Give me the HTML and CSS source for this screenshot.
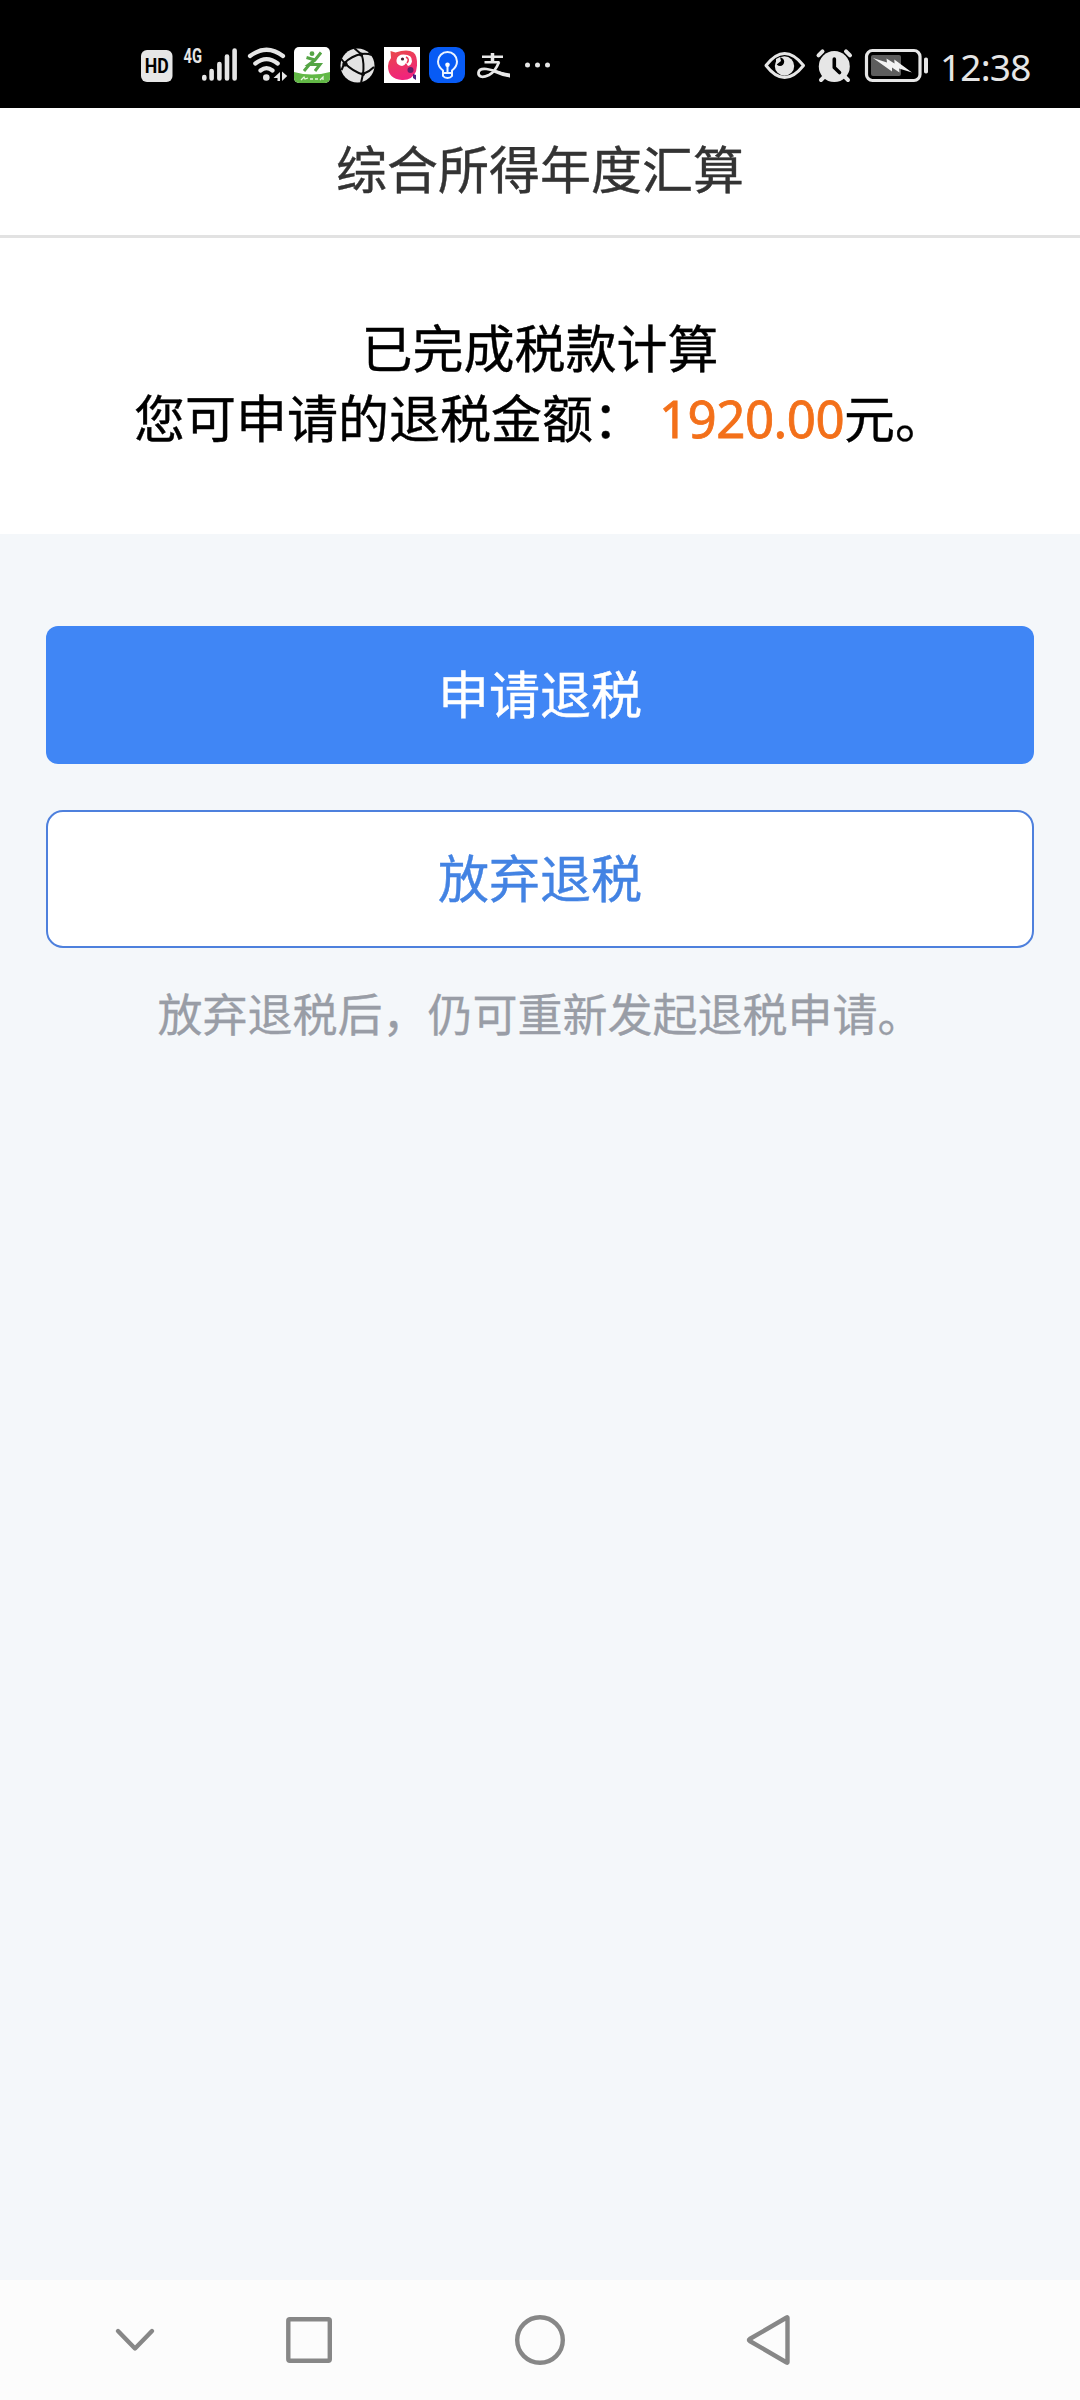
FILE: index.html
```html
<!DOCTYPE html>
<html lang="zh-CN">
<head>
<meta charset="utf-8">
<title>综合所得年度汇算</title>
<link rel="stylesheet" href="styles.css">
</head>
<body>
<div class="screen">
  <div class="status-bar">
    <div class="status-group">
      <svg class="hd" viewBox="141 40 37 46" width="37" height="46"><rect x="141" y="50" width="31.500" height="32" rx="6" fill="#e6e6e6"/><text x="156.700" y="73" text-anchor="middle" textLength="24" lengthAdjust="spacingAndGlyphs" class="hd-text">HD</text></svg>
      <svg viewBox="178 40 66 46" width="66" height="46"><text x="183.500" y="62.500" textLength="18.500" lengthAdjust="spacingAndGlyphs" class="net-text">4G</text><g stroke="#e6e6e6" stroke-width="4.600" stroke-linecap="round"><path d="M204.300 77v1.500M211.600 71v7.500M219.400 64v14.500M227 56.500v22M234.600 50.500v28"/></g></svg>
      <svg viewBox="244 40 50 46" width="50" height="46"><g fill="none" stroke="#e6e6e6" stroke-width="4.200" stroke-linecap="round"><path d="M250 56q16.500-12.500 33 0M255.300 63.500q11.200-8.800 22.400 0M260.500 70.500q6-4.600 12 0"/></g><circle cx="266.300" cy="77.500" r="3.300" fill="#e6e6e6"/><path d="M280 72v9h-2.500v-3h-4zM282 71.500l5.200 4.500-5.200 5z" fill="#e6e6e6"/></svg>
      <svg viewBox="294 40 45 46" width="45" height="46"><clipPath id="greenClip"><rect x="294" y="47" width="36" height="36" rx="5"/></clipPath><g clip-path="url(#greenClip)"><path fill="#fff" d="M294 47h36v36h-36z"/><path d="M294 72q18 5 36 0v12h-36z" fill="#62b846"/><circle cx="312" cy="53.700" r="2.400" fill="#55a545"/><path d="M306.500 57.500l8.500 2.500 6-7.500M315 60l-6 4.500h11l-5 6.500M309 65l-5 6" fill="none" stroke="#55a545" stroke-width="3"/><path d="M301 80l3-3 1 2 3-1M310 79h3M315 79h3M320 80l3-3v3" fill="none" stroke="#e8f6df" stroke-width="1.300"/></g></svg>
      <svg viewBox="339 40 45 46" width="45" height="46"><circle cx="357.500" cy="65.500" r="17" fill="#e3e3e3"/><path d="M344.500 63q7-7 17-9 3 9 1.500 20.500-10-3-18.500-11.500M361 54l-7-6M361 54q6-1 11 1M363 74q6-2 11-7M363 74l-2 9M344.500 63l-4-5M344.500 63l-3 7" fill="none" stroke="#090909" stroke-width="2"/><g fill="#090909"><circle cx="361" cy="54.500" r="2"/><circle cx="345" cy="64" r="2.600"/><circle cx="363" cy="74" r="2"/></g></svg>
      <svg viewBox="384 40 45 46" width="45" height="46"><defs><linearGradient id="bird" x2="0.300" y2="1"><stop stop-color="#e94948"/><stop offset="1" stop-color="#f0247c"/></linearGradient></defs><path fill="#fff" d="M384 47h36v36h-36z"/><path d="M390.500 51l5 1.500q12-4 18 0 4 3 3.500 13l-1 6q-4 9-14 8.500-14-1-14-14 0-4 3-8z" fill="url(#bird)"/><path d="M396.500 60q1-5.500 7-5.500 9 0 8.500 7-1 4-4 4.500l-2-3q-2 4-6 2.500-4-1.500-3.500-5.500" fill="#fff"/><path d="M406 57q4 2 1 6" fill="none" stroke="#ec3858" stroke-width="1.500"/><circle cx="402.500" cy="59" r="1.600" fill="#4b1d2e"/><circle cx="410.500" cy="70" r="3" fill="#681d68"/><path d="M413 74l3 1v5l-3-2z" fill="#4b1f7c"/></svg>
      <svg viewBox="429 40 45 46" width="45" height="46"><rect x="429" y="47" width="36" height="36" rx="9" fill="#075bf5"/><g fill="none" stroke="#eaf3ff" stroke-width="2" stroke-linejoin="round"><path d="M443 73v-2.500q-5-4-5-9a9.500 9.500 0 0 1 19 0q0 5-5 9V73zM443 73v3q1.500 2 4.500 2t4.500-2v-3M447.500 65v8"/></g><circle cx="447.500" cy="64.700" r="2.300" fill="#fff"/></svg>
      <svg viewBox="474 40 51 46" width="51" height="46"><g fill="none" stroke="#e8e8e8" stroke-linecap="butt"><path d="M482 56.700h21M484.500 62.300h15" stroke-width="2.400"/><path d="M492.500 53v10" stroke-width="3.500"/><path d="M499 62q-4 10-10 13-9 4-10.500-1-.5-6 8-5 7 1 13 3.500 5 2 10 3.300" stroke-width="2.700"/></g><path d="M494 69.500q8 3.500 16 4v4q-8-1-16.500-5z" fill="#e8e8e8"/></svg>
      <svg viewBox="525 40 28 46" width="28" height="46"><g fill="#e6e6e6"><circle cx="527.500" cy="65" r="2.500"/><circle cx="537.500" cy="65" r="2.500"/><circle cx="547.500" cy="65" r="2.500"/></g></svg>
    </div>
    <div class="status-group">
      <svg viewBox="763 40 51 46" width="51" height="46"><path d="M766 65.500q18.500-24 37.500 0-19 24-37.500 0z" fill="none" stroke="#e6e6e6" stroke-width="3" stroke-linejoin="round"/><circle cx="784.500" cy="66" r="9.700" fill="#e6e6e6"/><circle cx="780" cy="61.700" r="4.200"/><path d="M776 59l4-2 1 4-5 4z" fill="#e6e6e6"/></svg>
      <svg viewBox="814 40 50 46" width="50" height="46"><circle cx="834.300" cy="66.500" r="15.500" fill="#e6e6e6"/><path d="M818.500 55.300l4-4M850 55.300l-4-4M824 77l-3 3M845 77l3 3" fill="none" stroke="#e6e6e6" stroke-width="4" stroke-linecap="round"/><path d="M834.300 59v8.500l5.200 5" fill="none" stroke="#000" stroke-width="3.600" stroke-linecap="round" stroke-linejoin="round"/></svg>
      <svg viewBox="864 40 76 46" width="76" height="46"><rect x="866.500" y="50.500" width="53.500" height="30" rx="6" fill="none" stroke="#e6e6e6" stroke-width="3.200"/><rect x="871" y="55" width="30" height="21" rx="2" fill="#5d5d5d"/><path d="M873 58l14 4.500-.5-4 8 5-.2-4L912 72.500l-13-4 .5 4-7.500-5v4z" fill="#f2f2f2"/><rect x="924" y="57.500" width="4" height="16" rx="1.800" fill="#e6e6e6"/></svg>
      <span class="clock">12:38</span>
    </div>
  </div>
  <header class="title-bar">综合所得年度汇算</header>
  <section class="result">
    <p>已完成税款计算</p>
    <p>您可申请的退税金额：<span class="amount">1920.00</span>元。</p>
  </section>
  <main class="actions">
    <button class="btn btn-primary">申请退税</button>
    <button class="btn btn-outline">放弃退税</button>
    <p class="hint">放弃退税后，仍可重新发起退税申请。</p>
  </main>
  <nav class="nav-bar">
    <svg viewBox="110 2310 50 60" width="50" height="60"><path d="M118 2331l17 17.500 17-17.500"/></svg>
    <svg viewBox="284 2310 50 60" width="50" height="60"><rect x="288.300" y="2319.300" width="41.500" height="41.500" rx="1.500"/></svg>
    <svg viewBox="515 2310 50 60" width="50" height="60"><circle cx="540" cy="2340" r="22.800"/></svg>
    <svg viewBox="743 2310 50 60" width="50" height="60"><path d="M787.500 2317.800v44.400q0 .8-.8.300l-37-21.500q-1.500-1 0-2l37-21.500q.8-.5.800.3z"/></svg>
  </nav>
</div>
</body>
</html>
```

FILE: styles.css
```css
* { box-sizing: border-box; }
body {
  margin: 0;
  font-family: "Noto Sans CJK SC", sans-serif;
  background: #f4f7fa;
}
p { margin: 0; }
svg { display: block; flex: none; overflow: visible; }
.screen {
  width: 1080px;
  height: 2400px;
  display: flex;
  flex-direction: column;
}
.status-bar {
  height: 108px;
  padding: 40px 48px 0 141px;
  background: #000;
  display: flex;
  justify-content: space-between;
  align-items: flex-start;
}
.status-group { display: flex; align-items: flex-start; }
.hd-text { font: 700 21px Roboto, sans-serif; fill: #000; }
.net-text { font: 700 20px Roboto, sans-serif; fill: #e6e6e6; }
.clock {
  width: 92px;
  height: 46px;
  font: 400 37px/53px "Noto Sans", sans-serif;
  letter-spacing: -0.8px;
  color: #e6e6e6;
  white-space: nowrap;
}
.title-bar {
  height: 130px;
  border-bottom: 3px solid #e2e2e2;
  background: #fff;
  color: #333;
  font-size: 51px;
  line-height: 118px;
  text-align: center;
  -webkit-text-stroke: 0.4px;
}
.result {
  height: 296px;
  padding-top: 73px;
  background: #fff;
  color: #000;
  font-size: 51px;
  line-height: 70px;
  text-align: center;
  white-space: nowrap;
  -webkit-text-stroke: 0.4px;
}
.amount {
  margin-left: 15px;
  font-family: "Noto Sans", sans-serif;
  letter-spacing: -0.5px;
  color: #f3701a;
  -webkit-text-stroke: 0.8px;
}
.actions {
  flex: 1;
  padding: 92px 46px 0;
  display: flex;
  flex-direction: column;
}
.btn {
  height: 138px;
  padding: 0 0 5px;
  border: 0;
  font: 400 51px/1 "Noto Sans CJK SC", sans-serif;
  -webkit-text-stroke: 0.4px;
}
.btn-primary {
  margin-bottom: 46px;
  border-radius: 12px;
  background: #4086f5;
  color: #fff;
}
.btn-outline {
  border: 2px solid #4e80dd;
  border-radius: 17px;
  background: #fff;
  color: #4383e3;
}
.hint {
  margin-top: 32px;
  color: #999da6;
  font-size: 45px;
  line-height: 66px;
  text-align: center;
  white-space: nowrap;
  -webkit-text-stroke: 0.3px;
}
.nav-bar {
  height: 120px;
  padding: 30px 287px 0 110px;
  background: #fcfcfc;
  display: grid;
  grid-template-columns: 174px 231px 228px 50px;
}
.nav-bar svg {
  fill: none;
  stroke: #878787;
  stroke-width: 4.400px;
  stroke-linecap: round;
  stroke-linejoin: round;
}
```
